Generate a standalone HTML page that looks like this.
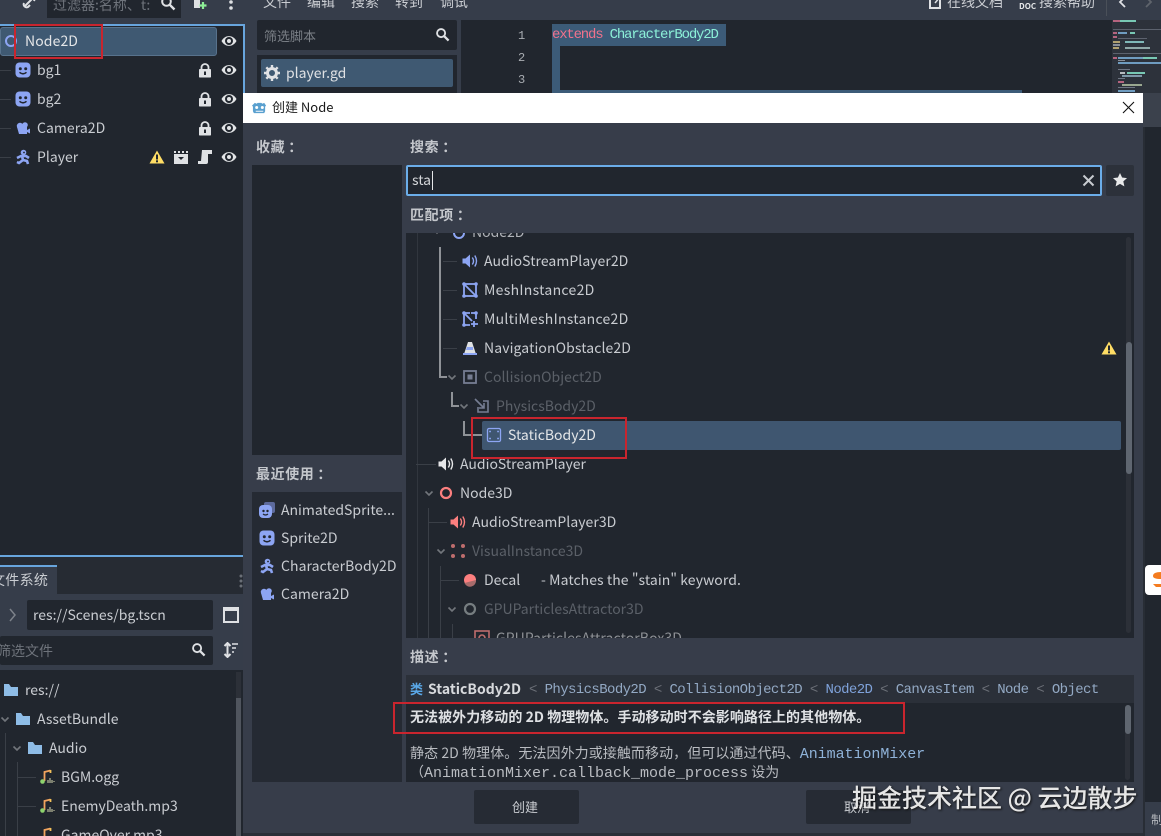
<!DOCTYPE html>
<html lang="zh"><head><meta charset="utf-8"><title>创建 Node</title>
<style>
html,body{margin:0;padding:0;background:#21262e}
#r{position:relative;width:1161px;height:836px;overflow:hidden;background:#363d4a;font-family:"Noto Sans CJK SC","Liberation Sans",sans-serif;font-size:14px;color:#c9ccd1;filter:blur(.3px)}
#r div,#r span.t,#r svg{position:absolute}
.t{white-space:nowrap;line-height:20px;display:block}
.d{color:#5b6068}
.l{font-weight:700;color:#c4c7cc;letter-spacing:.6px}
.l i{font-style:normal;margin-left:3px}
.b{background:#21262e}
.m{font-family:"Liberation Mono",monospace;font-size:13px}
.w{background:#3a3f47}
.g{background:#8f9297}
</style></head><body><div id="r">
<svg width="0" height="0" style="position:absolute">
<defs>
<symbol id="face" viewBox="0 0 16 16"><rect x=".5" y=".5" width="15" height="15" rx="4" fill="#8da5f3"/><circle cx="5.300" cy="6.800" r="1.500" fill="#21262e"/><circle cx="10.700" cy="6.800" r="1.500" fill="#21262e"/><path d="M4.500 10.300q3.500 3 7 0" fill="none" stroke="#21262e" stroke-width="1.500"/></symbol>
<symbol id="eye" viewBox="0 0 16 16"><path d="M.5 8C4 1.500 12 1.500 15.500 8C12 14.500 4 14.500 .5 8z" fill="#e2e4e6"/><circle cx="8" cy="8" r="4" fill="#21262e"/><circle cx="8" cy="8" r="2" fill="#e2e4e6"/></symbol>
<symbol id="lock" viewBox="0 0 16 16"><path d="M4.500 8V5.500a3.500 3.500 0 0 1 7 0V8" fill="none" stroke="#dfe1e4" stroke-width="1.800"/><rect x="2" y="7" width="12" height="8.500" rx=".8" fill="#dfe1e4"/><rect x="7" y="9.500" width="2" height="3.500" fill="#21262e"/></symbol>
<symbol id="cam" viewBox="0 0 16 16"><circle cx="5" cy="6" r="3.200" fill="#8da5f3"/><circle cx="10" cy="5" r="2.800" fill="#8da5f3"/><path d="M2 7h10v3l3-1.500v5l-3-1.500v2H4z" fill="#8da5f3"/></symbol>
<symbol id="run" viewBox="0 0 16 16"><circle cx="8.500" cy="3.500" r="2.800" fill="#8da5f3"/><circle cx="9" cy="3.500" r=".9" fill="#21262e"/><path d="M2 9l4-2h5l3 2M7 7l1 4-4 3-2-1M8 11l4 1 1 3" fill="none" stroke="#8da5f3" stroke-width="2.600"/></symbol>
<symbol id="warn" viewBox="0 0 16 16"><path d="M8 1.500L15.500 14.500H.5z" fill="#ffdd65"/><rect x="7" y="5.500" width="2" height="5" fill="#21262e"/><rect x="7" y="11.300" width="2" height="2" fill="#21262e"/></symbol>
<symbol id="search" viewBox="0 0 16 16"><circle cx="6.500" cy="6.500" r="4.300" fill="none" stroke="#dfe1e4" stroke-width="2"/><path d="M9.800 9.800l4.700 4.700" stroke="#dfe1e4" stroke-width="2.400"/></symbol>
<symbol id="spk" viewBox="0 0 16 16"><path d="M.5 5.500h3L8 1.500v13l-4.500-4h-3z" fill="currentColor"/><path d="M10.300 4.500q2.500 3.500 0 7M12.800 2.500q3.400 5.500 0 11" fill="none" stroke="currentColor" stroke-width="1.400"/></symbol>
<symbol id="down" viewBox="0 0 10 10"><path d="M1.500 3.500L5 7l3.500-3.500" fill="none" stroke="#72767c" stroke-width="1.600"/></symbol>
<symbol id="folder" viewBox="0 0 16 16"><path d="M1 2h5l2 3h7v9H1z" fill="#8ebce6"/></symbol>
<symbol id="music" viewBox="0 0 16 16"><path d="M5.500 12V3l6-1.500" fill="none" stroke="#f1a35e" stroke-width="1.800"/><path d="M11.500 1v3" stroke="#f4c25a" stroke-width="1.800"/><circle cx="3.500" cy="12.500" r="2.300" fill="#8ed36e"/><path d="M9 11v3M11 9v5M13 11v3M15 12v1" stroke="#d8d8b0" stroke-width="1"/></symbol>
</defs></svg>

<!-- scene dock -->
<div class="b" style="left:47px;top:0;width:134px;height:18px"></div>
<span class="t" style="left:53px;top:-5px;color:#6e737b">过滤器:名称、t:</span>
<svg style="left:160px;top:-5px" width="16" height="16"><use href="#search"/></svg>
<svg style="left:21px;top:-6px" width="16" height="16" viewBox="0 0 16 16"><path d="M4 12l8-8M3 9a3 3 0 0 0 4 4l2-2M13 7a3 3 0 0 0-4-4L7 5" fill="none" stroke="#dfe1e4" stroke-width="2"/></svg>
<svg style="left:192px;top:-2px" width="16" height="14" viewBox="0 0 16 14"><path d="M2 0h6v10H2z" fill="#dfe1e4"/><path d="M11 4v7M7.500 7.500h7" stroke="#8eef97" stroke-width="2.200"/></svg>
<svg style="left:228px;top:-2px" width="6" height="16"><circle cx="3" cy="4" r="1.800" fill="#dfe1e4"/><circle cx="3" cy="10" r="1.800" fill="#dfe1e4"/></svg>
<div class="b" style="left:0;top:24px;width:243px;height:532px"></div>
<div style="left:0;top:24px;width:244px;height:2px;background:#68a5dd"></div>
<div style="left:243px;top:24px;width:2px;height:69px;background:#68a5dd"></div>
<div style="left:0;top:27px;width:217px;height:29px;background:#3f5972;border:1px solid #58728c;border-radius:3px;box-sizing:border-box"></div>
<svg style="left:4px;top:34px" width="14" height="14"><circle cx="7" cy="7" r="5" fill="none" stroke="#8da5f3" stroke-width="2"/></svg>
<span class="t" style="left:25px;top:31px;color:#e4e6e8;letter-spacing:.1px">Node2D</span>
<svg style="left:221px;top:33px" width="16" height="16"><use href="#eye"/></svg>
<div class="w" style="left:0;top:70px;width:11px;height:1px"></div><div class="w" style="left:0;top:99px;width:11px;height:1px"></div><div class="w" style="left:0;top:128px;width:11px;height:1px"></div><div class="w" style="left:0;top:157px;width:11px;height:1px"></div>
<svg style="left:15px;top:62px" width="16" height="16"><use href="#face"/></svg><span class="t" style="left:37px;top:60px">bg1</span>
<svg style="left:15px;top:91px" width="16" height="16"><use href="#face"/></svg><span class="t" style="left:37px;top:89px">bg2</span>
<svg style="left:15px;top:120px" width="16" height="16"><use href="#cam"/></svg><span class="t" style="left:37px;top:118px;letter-spacing:.05px">Camera2D</span>
<svg style="left:15px;top:149px" width="16" height="16"><use href="#run"/></svg><span class="t" style="left:37px;top:147px">Player</span>
<svg style="left:197px;top:62px" width="16" height="16"><use href="#lock"/></svg><svg style="left:221px;top:62px" width="16" height="16"><use href="#eye"/></svg>
<svg style="left:197px;top:91px" width="16" height="16"><use href="#lock"/></svg><svg style="left:221px;top:91px" width="16" height="16"><use href="#eye"/></svg>
<svg style="left:197px;top:120px" width="16" height="16"><use href="#lock"/></svg><svg style="left:221px;top:120px" width="16" height="16"><use href="#eye"/></svg>
<svg style="left:149px;top:149px" width="16" height="16"><use href="#warn"/></svg>
<svg style="left:173px;top:149px" width="16" height="16" viewBox="0 0 16 16"><path d="M1 5h14v10H1z" fill="#dfe1e4"/><path d="M1 2h2v2H1zM5 2h2v2H5zM9 2h2v2H9zM13 2h2v2h-2z" fill="#dfe1e4"/><path d="M5 8h6l-3 3z" fill="#21262e"/></svg>
<svg style="left:197px;top:149px" width="16" height="16" viewBox="0 0 16 16"><path d="M5 1h10v4h-4v8a2 2 0 0 1-2 2H1v-3h3z" fill="#dfe1e4"/></svg>
<svg style="left:221px;top:149px" width="16" height="16"><use href="#eye"/></svg>

<!-- file system dock -->
<div style="left:0;top:555px;width:243px;height:2px;background:#68a5dd"></div>
<div style="left:0;top:557px;width:243px;height:8px;background:#262b33"></div>
<div style="left:57px;top:565px;width:186px;height:29px;background:#262b33"></div>
<div style="left:0;top:565px;width:57px;height:29px;background:#363d4a;border-top:2px solid #68a5dd;box-sizing:border-box"></div>
<span class="t" style="left:-9px;top:570px;letter-spacing:.3px">文件系统</span>
<svg style="left:238px;top:573px" width="6" height="16"><circle cx="3" cy="3" r="1.500" fill="#6a6f77"/><circle cx="3" cy="8" r="1.500" fill="#6a6f77"/><circle cx="3" cy="13" r="1.500" fill="#6a6f77"/></svg>
<svg style="left:8px;top:607px" width="9" height="16"><path d="M2 2l5 6-5 6" fill="none" stroke="#7d828a" stroke-width="1.500"/></svg>
<div class="b" style="left:27px;top:600px;width:186px;height:30px;border-radius:2px"></div>
<span class="t" style="left:33px;top:605px">res://Scenes/bg.tscn</span>
<svg style="left:223px;top:607px" width="16" height="16"><rect x="1" y="1" width="14" height="14" fill="none" stroke="#dfe1e4" stroke-width="2"/><rect x="1" y="1" width="14" height="3" fill="#dfe1e4"/></svg>
<div class="b" style="left:0;top:636px;width:213px;height:29px;border-radius:2px"></div>
<span class="t" style="left:-3px;top:641px;color:#6e737b">筛选文件</span>
<svg style="left:191px;top:642px" width="15" height="15" viewBox="0 0 16 16"><use href="#search"/></svg>
<svg style="left:223px;top:642px" width="16" height="16" viewBox="0 0 16 16"><path d="M4.500 1v14M1.500 4l3-3 3 3M1.500 12l3 3 3-3" fill="none" stroke="#dfe1e4" stroke-width="2"/><path d="M9 2h6M9 6h4M9 10h2" stroke="#dfe1e4" stroke-width="1.500"/></svg>
<div class="b" style="left:0;top:670px;width:243px;height:166px"></div>
<div style="left:236px;top:672px;width:5px;height:164px;background:#2c3038"></div>
<div style="left:236px;top:698px;width:5px;height:138px;background:#50555e"></div>
<div class="w" style="left:5px;top:733px;width:1px;height:103px"></div>
<div class="w" style="left:17px;top:762px;width:1px;height:74px"></div>
<div class="w" style="left:18px;top:777px;width:18px;height:1px"></div><div class="w" style="left:18px;top:806px;width:18px;height:1px"></div>
<svg style="left:3px;top:682px" width="16" height="16"><use href="#folder"/></svg><span class="t" style="left:25px;top:680px">res://</span>
<svg style="left:0;top:714px" width="10" height="10"><use href="#down"/></svg>
<svg style="left:15px;top:711px" width="16" height="16"><use href="#folder"/></svg><span class="t" style="left:37px;top:709px">AssetBundle</span>
<svg style="left:12px;top:743px" width="10" height="10"><use href="#down"/></svg>
<svg style="left:27px;top:740px" width="16" height="16"><use href="#folder"/></svg><span class="t" style="left:49px;top:738px">Audio</span>
<svg style="left:39px;top:769px" width="16" height="16"><use href="#music"/></svg><span class="t" style="left:61px;top:767px">BGM.ogg</span>
<svg style="left:39px;top:798px" width="16" height="16"><use href="#music"/></svg><span class="t" style="left:61px;top:796px">EnemyDeath.mp3</span>
<svg style="left:39px;top:827px" width="16" height="16"><use href="#music"/></svg><span class="t" style="left:61px;top:825px">GameOver.mp3</span>

<!-- script panel / top menu -->
<span class="t" style="left:263px;top:-8px">文件</span>
<span class="t" style="left:307px;top:-8px">编辑</span>
<span class="t" style="left:351px;top:-8px">搜索</span>
<span class="t" style="left:395px;top:-8px">转到</span>
<span class="t" style="left:440px;top:-8px">调试</span>
<svg style="left:928px;top:-4px" width="14" height="14" viewBox="0 0 14 14"><path d="M2 1v11h10V4" fill="none" stroke="#dfe1e4" stroke-width="2"/><path d="M7 7l5-6" stroke="#dfe1e4" stroke-width="1.500"/></svg>
<span class="t" style="left:947px;top:-8px">在线文档</span>
<span class="t" style="left:1019px;top:-3px;font-size:8px;font-weight:700;color:#e4e6e8">DOC</span>
<span class="t" style="left:1039px;top:-8px">搜索帮助</span>
<div style="left:1106px;top:0;width:1px;height:16px;background:#4a5059"></div>
<svg style="left:1118px;top:-3px" width="10" height="12"><path d="M7 0L2 5l5 5" fill="none" stroke="#dfe1e4" stroke-width="1.800"/></svg>
<svg style="left:1143px;top:-3px" width="10" height="12"><path d="M3 0l5 5-5 5" fill="none" stroke="#5f646c" stroke-width="1.800"/></svg>
<div class="b" style="left:257px;top:20px;width:200px;height:30px;border-radius:2px"></div>
<span class="t" style="left:264px;top:26px;font-size:13px;color:#7b8087">筛选脚本</span>
<svg style="left:435px;top:27px" width="15" height="15" viewBox="0 0 16 16"><use href="#search"/></svg>
<div class="b" style="left:257px;top:55px;width:200px;height:38px"></div>
<div style="left:261px;top:59px;width:192px;height:28px;background:#3f5972;border-radius:2px"></div>
<svg style="left:264px;top:65px" width="16" height="16" viewBox="0 0 16 16"><circle cx="8" cy="8" r="4.500" fill="none" stroke="#dfe1e4" stroke-width="3"/><path d="M8 0v3M8 13v3M0 8h3M13 8h3M2.300 2.300l2 2M11.700 11.700l2 2M13.700 2.300l-2 2M4.300 11.700l-2 2" stroke="#dfe1e4" stroke-width="2.400"/></svg>
<span class="t" style="left:286px;top:63px;color:#dfe1e4">player.gd</span>
<div class="b" style="left:461px;top:20px;width:651px;height:73px"></div>
<span class="t m" style="left:518px;top:26px;color:#a9adb2;font-size:12px">1</span>
<span class="t m" style="left:518px;top:48px;color:#a9adb2;font-size:12px">2</span>
<span class="t m" style="left:518px;top:70px;color:#a9adb2;font-size:12px">3</span>
<div style="left:552px;top:24px;width:174px;height:22px;background:#3c5b78"></div>
<div style="left:552px;top:46px;width:8px;height:47px;background:#3c5b78"></div>
<div style="left:552px;top:90px;width:470px;height:3px;background:#3c5b78"></div>
<span class="t m" style="left:552px;top:25px;font-size:14px;letter-spacing:-1.200px;color:#f0728c">extends <span style="color:#8cf0d8">CharacterBody2D</span></span>
<!-- minimap -->
<div style="left:1112px;top:20px;width:49px;height:73px;background:#2d323b"></div>
<div style="left:1113px;top:20px;width:7px;height:2px;background:#b5647f"></div><div style="left:1120px;top:20px;width:16px;height:2px;background:#78c8b4"></div>
<div style="left:1113px;top:29px;width:48px;height:1px;background:#5c626e"></div>
<div style="left:1113px;top:32px;width:4px;height:2px;background:#b5647f"></div><div style="left:1118px;top:32px;width:9px;height:2px;background:#6f9cc0"></div><div style="left:1130px;top:32px;width:5px;height:2px;background:#78c8b4"></div>
<div style="left:1113px;top:36px;width:4px;height:2px;background:#b5647f"></div>
<div style="left:1118px;top:38px;width:29px;height:1px;background:#5c626e"></div>
<div style="left:1113px;top:41px;width:7px;height:2px;background:#b0a070"></div><div style="left:1125px;top:41px;width:19px;height:2px;background:#7fb8b8"></div>
<div style="left:1113px;top:44px;width:7px;height:2px;background:#8a8f98"></div>
<div style="left:1113px;top:47px;width:6px;height:2px;background:#b0a070"></div><div style="left:1125px;top:47px;width:25px;height:2px;background:#8fa8a8"></div>
<div style="left:1113px;top:53px;width:48px;height:1px;background:#5c626e"></div>
<div style="left:1113px;top:57px;width:4px;height:2px;background:#b5647f"></div><div style="left:1118px;top:57px;width:25px;height:2px;background:#6f9cc0"></div><div style="left:1143px;top:57px;width:14px;height:2px;background:#78c8b4"></div>
<div style="left:1118px;top:60px;width:7px;height:1px;background:#8a8f98"></div>
<div style="left:1118px;top:62px;width:43px;height:2px;background:#6f9cc0"></div>
<div style="left:1118px;top:69px;width:12px;height:1px;background:#6f7684"></div>
<div style="left:1120px;top:72px;width:5px;height:2px;background:#b8bcc0"></div><div style="left:1127px;top:72px;width:18px;height:2px;background:#78c8b4"></div>
<div style="left:1122px;top:75px;width:20px;height:2px;background:#7f98a8"></div>
<div style="left:1118px;top:78px;width:7px;height:1px;background:#6f7684"></div>
<div style="left:1118px;top:81px;width:6px;height:2px;background:#b5647f"></div>
<div style="left:1122px;top:84px;width:20px;height:2px;background:#9aa890"></div>
<div style="left:1118px;top:87px;width:17px;height:1px;background:#6f7684"></div>
<div style="left:1118px;top:90px;width:17px;height:2px;background:#6f9cc0"></div>
<div style="left:1143px;top:93px;width:18px;height:34px;background:#3b414c"></div>
<div style="left:1145px;top:127px;width:16px;height:709px;background:#21262e"></div>
<div style="left:1143px;top:127px;width:2px;height:709px;background:#282d35"></div>
<div style="left:1145px;top:565px;width:16px;height:30px;background:#fff;border-radius:4px 0 0 4px"></div>
<svg style="left:1152px;top:571px" width="9" height="18"><path d="M9 1Q1 1 1 5q0 3 8 3zM1 13h8v3H4z" fill="#f47c20"/></svg>
<div style="left:1145px;top:802px;width:16px;height:34px;background:#363d4a"></div>
<span class="t" style="left:1151px;top:810px;font-size:12px;color:#b5b8bd">制</span>

<!-- dialog -->
<div style="left:243px;top:93px;width:900px;height:30px;background:#fff"></div>
<svg style="left:252px;top:100px" width="15" height="15" viewBox="0 0 16 16"><path d="M3 3l2 1 1-1h4l1 1 2-1 2 3-1 1v5l-1 2H2l-1-2V7L0 6z" fill="#5aa0cf"/><circle cx="5" cy="8" r="1.600" fill="#fff"/><circle cx="11" cy="8" r="1.600" fill="#fff"/><path d="M4 12h8" stroke="#fff"/></svg>
<span class="t" style="left:272px;top:97px;font-size:13px;color:#1a1a1a">创建 Node</span>
<svg style="left:1122px;top:101px" width="13" height="13"><path d="M1 1l11 11M12 1L1 12" stroke="#111" stroke-width="1.100"/></svg>
<div style="left:243px;top:123px;width:900px;height:710px;background:#373d4a"></div>
<div style="left:243px;top:833px;width:900px;height:3px;background:#2a2f38"></div>

<span class="t l" style="left:256px;top:137px">收藏<i>：</i></span>
<div class="b" style="left:252px;top:165px;width:150px;height:290px;background:#21262e"></div>
<span class="t l" style="left:256px;top:464px">最近使用<i>：</i></span>
<div style="left:252px;top:492px;width:150px;height:290px;background:#252a33"></div>
<svg style="left:259px;top:502px" width="16" height="16" viewBox="0 0 16 16"><rect x="5" y="0" width="11" height="11" rx="2" fill="#5d6a9c"/><rect x="0" y="3" width="13" height="13" rx="4" fill="#8da5f3"/><circle cx="4.500" cy="9" r="1.200" fill="#21262e"/><circle cx="8.500" cy="9" r="1.200" fill="#21262e"/><path d="M4 12q2.500 2 5 0" fill="none" stroke="#21262e" stroke-width="1.200"/></svg>
<span class="t" style="left:281px;top:500px">AnimatedSprite...</span>
<svg style="left:259px;top:530px" width="16" height="16"><use href="#face"/></svg><span class="t" style="left:281px;top:528px">Sprite2D</span>
<svg style="left:259px;top:558px" width="16" height="16"><use href="#run"/></svg><span class="t" style="left:281px;top:556px;letter-spacing:.07px">CharacterBody2D</span>
<svg style="left:259px;top:586px" width="16" height="16"><use href="#cam"/></svg><span class="t" style="left:281px;top:584px;letter-spacing:.05px">Camera2D</span>

<span class="t l" style="left:410px;top:137px">搜索<i>：</i></span>
<div class="b" style="left:406px;top:165px;width:696px;height:31px;border:2px solid #6bade9;box-sizing:border-box;border-radius:2px"></div>
<span class="t" style="left:412px;top:170px;color:#d4d6d9">sta</span>
<div style="left:432px;top:171px;width:1px;height:19px;background:#e4e6e8"></div>
<svg style="left:1082px;top:174px" width="13" height="13"><path d="M1.500 1.500l10 10M11.500 1.500l-10 10" stroke="#c8cbd0" stroke-width="2"/></svg>
<div style="left:1106px;top:165px;width:28px;height:31px;background:#2c313a;border-radius:2px"></div>
<svg style="left:1113px;top:173px" width="14" height="14" viewBox="0 0 16 16"><path d="M8 0l2.400 5.200 5.600.6-4.200 3.800 1.200 5.700L8 12.400 3 15.300l1.200-5.700L0 5.800l5.600-.6z" fill="#e8e9ea"/></svg>
<span class="t l" style="left:410px;top:205px">匹配项<i>：</i></span>

<!-- results tree -->
<div class="b" style="left:406px;top:233px;width:728px;height:405px;overflow:hidden">
<span class="t d" style="left:66px;top:-11px;color:#b0b3b8">Node2D</span>
<svg style="left:46px;top:-7px" width="14" height="14"><circle cx="7" cy="7" r="5" fill="none" stroke="#8da5f3" stroke-width="2"/></svg>
<svg style="left:26px;top:-7px" width="10" height="10"><use href="#down"/></svg>
<div style="left:11px;top:0;width:1px;height:405px;background:#31363e"></div>
<div class="g" style="left:33px;top:14px;width:2px;height:131px"></div><div class="g" style="left:33px;top:143px;width:8px;height:2px"></div>
<div class="w" style="left:37px;top:28px;width:14px;height:1px"></div><div class="w" style="left:37px;top:57px;width:14px;height:1px"></div><div class="w" style="left:37px;top:86px;width:14px;height:1px"></div><div class="w" style="left:37px;top:115px;width:14px;height:1px"></div>
<svg style="left:56px;top:20px;color:#8da5f3" width="16" height="16"><use href="#spk"/></svg><span class="t" style="left:78px;top:18px;letter-spacing:.05px">AudioStreamPlayer2D</span>
<svg style="left:56px;top:49px" width="16" height="16" viewBox="0 0 16 16"><rect x="2" y="2" width="12" height="12" fill="none" stroke="#8da5f3" stroke-width="1.800"/><path d="M2 2l12 12" stroke="#8da5f3" stroke-width="1.800"/><circle cx="2" cy="2" r="1.800" fill="#8da5f3"/><circle cx="14" cy="2" r="1.800" fill="#8da5f3"/><circle cx="2" cy="14" r="1.800" fill="#8da5f3"/><circle cx="14" cy="14" r="1.800" fill="#8da5f3"/></svg><span class="t" style="left:78px;top:47px;letter-spacing:.3px">MeshInstance2D</span>
<svg style="left:56px;top:78px" width="16" height="16" viewBox="0 0 16 16"><path d="M8 2H2v12h6M2 2l8 8" fill="none" stroke="#8da5f3" stroke-width="1.800"/><path d="M14 2v6" stroke="#8da5f3" stroke-width="1.800"/><path d="M9 2h5M12 10v6M9 13h7" stroke="#8da5f3" stroke-width="1.800"/><circle cx="2" cy="2" r="1.800" fill="#8da5f3"/><circle cx="14" cy="2" r="1.800" fill="#8da5f3"/><circle cx="2" cy="14" r="1.800" fill="#8da5f3"/></svg><span class="t" style="left:78px;top:76px;letter-spacing:.27px">MultiMeshInstance2D</span>
<svg style="left:56px;top:107px" width="16" height="16" viewBox="0 0 16 16"><path d="M6 2h4l4 12H2z" fill="#dfe1e4"/><path d="M5 7h6v3H4z" fill="#8da5f3"/><rect x="1" y="13" width="14" height="2" fill="#8da5f3"/></svg><span class="t" style="left:78px;top:105px;letter-spacing:.1px">NavigationObstacle2D</span>
<svg style="left:695px;top:107px" width="16" height="16"><use href="#warn"/></svg>
<svg style="left:41px;top:139px" width="10" height="10"><use href="#down"/></svg>
<svg style="left:56px;top:136px" width="16" height="16" viewBox="0 0 16 16"><rect x="2" y="2" width="12" height="12" fill="none" stroke="#767d92" stroke-width="1.800"/><rect x="5.500" y="5.500" width="5" height="5" fill="#767d92"/></svg><span class="t d" style="left:78px;top:134px;letter-spacing:.05px">CollisionObject2D</span>
<div class="g" style="left:45px;top:159px;width:2px;height:15px"></div><div class="g" style="left:45px;top:172px;width:8px;height:2px"></div>
<svg style="left:53px;top:168px" width="10" height="10"><use href="#down"/></svg>
<svg style="left:68px;top:165px" width="16" height="16" viewBox="0 0 16 16"><path d="M9 3h5v11H4V9" fill="none" stroke="#767d92" stroke-width="1.600"/><path d="M1 1l9 9M5 10h5V5" fill="none" stroke="#767d92" stroke-width="1.600"/></svg><span class="t d" style="left:90px;top:163px">PhysicsBody2D</span>
<div class="g" style="left:57px;top:188px;width:2px;height:15px"></div><div class="g" style="left:57px;top:201px;width:19px;height:2px"></div>
<div style="left:76px;top:188px;width:639px;height:29px;background:#3f5670;border-radius:2px"></div>
<svg style="left:80px;top:194px" width="16" height="16" viewBox="0 0 16 16"><rect x="1.500" y="1.500" width="13" height="13" rx="1.500" fill="none" stroke="#8da5f3" stroke-width="1.300"/><path d="M4 4.500h.1M12 4.500h.1M4 11.500h.1M12 11.500h.1" stroke="#8da5f3" stroke-width="1.600" stroke-linecap="square"/></svg><span class="t" style="left:102px;top:192px;color:#e4e6e8">StaticBody2D</span>
<div class="w" style="left:10px;top:231px;width:20px;height:1px"></div>
<svg style="left:32px;top:223px;color:#e6e7e9" width="16" height="16"><use href="#spk"/></svg><span class="t" style="left:54px;top:221px">AudioStreamPlayer</span>
<svg style="left:18px;top:255px" width="10" height="10"><use href="#down"/></svg>
<svg style="left:32px;top:252px" width="16" height="16"><circle cx="8" cy="8" r="5" fill="none" stroke="#fc7f7f" stroke-width="2.200"/></svg><span class="t" style="left:54px;top:250px">Node3D</span>
<div class="w" style="left:22px;top:275px;width:1px;height:130px"></div><div class="w" style="left:23px;top:289px;width:18px;height:1px"></div>
<svg style="left:44px;top:281px;color:#fc7f7f" width="16" height="16"><use href="#spk"/></svg><span class="t" style="left:66px;top:279px;letter-spacing:.05px">AudioStreamPlayer3D</span>
<svg style="left:30px;top:313px" width="10" height="10"><use href="#down"/></svg>
<svg style="left:44px;top:310px" width="16" height="16"><circle cx="3" cy="3" r="2" fill="#bd6d6d"/><circle cx="13" cy="3" r="2" fill="#bd6d6d"/><circle cx="3" cy="13" r="2" fill="#bd6d6d"/><circle cx="13" cy="13" r="2" fill="#bd6d6d"/></svg><span class="t d" style="left:66px;top:308px">VisualInstance3D</span>
<div class="w" style="left:34px;top:333px;width:1px;height:72px"></div><div class="w" style="left:35px;top:347px;width:18px;height:1px"></div>
<svg style="left:56px;top:339px" width="16" height="16" viewBox="0 0 16 16"><circle cx="8" cy="8" r="6" fill="#fc7f7f"/><path d="M2.500 11L14 8a6 6 0 0 1-11.500 3z" fill="#a86b6b"/></svg><span class="t" style="left:78px;top:337px">Decal</span>
<span class="t" style="left:135px;top:337px;letter-spacing:.07px">- Matches the "stain" keyword.</span>
<svg style="left:41px;top:371px" width="10" height="10"><use href="#down"/></svg>
<svg style="left:56px;top:368px" width="16" height="16"><circle cx="8" cy="8" r="5" fill="none" stroke="#767d80" stroke-width="2.200"/></svg><span class="t d" style="left:78px;top:366px">GPUParticlesAttractor3D</span>
<div class="w" style="left:46px;top:391px;width:1px;height:14px"></div>
<svg style="left:68px;top:397px" width="16" height="16" viewBox="0 0 16 16"><rect x="1" y="1" width="14" height="14" fill="none" stroke="#bd6d6d" stroke-width="1.600"/><circle cx="8" cy="8" r="3" fill="none" stroke="#bd6d6d" stroke-width="1.600"/></svg><span class="t d" style="left:90px;top:395px;color:#8f9297;letter-spacing:.08px">GPUParticlesAttractorBox3D</span>
<div style="left:720px;top:4px;width:5px;height:396px;background:#2c3038;border-radius:3px"></div>
<div style="left:720px;top:109px;width:6px;height:132px;background:#5f6670;border-radius:3px"></div>
</div>

<!-- description -->
<span class="t l" style="left:410px;top:647px">描述<i>：</i></span>
<div class="b" style="left:406px;top:675px;width:728px;height:107px"></div>
<div style="left:406px;top:675px;width:728px;height:28px;background:#2b3039"></div>
<span class="t" style="left:410px;top:679px;color:#5aa8e8;font-weight:700;font-size:13px">类</span>
<span class="t" style="left:428px;top:679px;font-weight:700;font-size:14px;color:#d8dadd">StaticBody2D</span>
<span class="t m" style="left:529px;top:680px;color:#93a9c4;font-size:14px;letter-spacing:-.6px"><span style="color:#6c7078">&lt;</span> PhysicsBody2D <span style="color:#6c7078">&lt;</span> CollisionObject2D <span style="color:#6c7078">&lt;</span> <span style="color:#7fa2da">Node2D</span> <span style="color:#6c7078">&lt;</span> CanvasItem <span style="color:#6c7078">&lt;</span> Node <span style="color:#6c7078">&lt;</span> Object</span>
<span class="t" style="left:410px;top:707px;font-weight:700;font-size:14px;color:#dfe1e4;letter-spacing:.05px">无法被外力移动的 2D 物理物体。手动移动时不会影响路径上的其他物体。</span>
<span class="t" style="left:410px;top:743px;font-size:14px;color:#b9bcc1;letter-spacing:.07px">静态 2D 物理体。无法因外力或接触而移动，但可以通过代码、<span class="m" style="font-size:15px;color:#8fb2d8;letter-spacing:-.05px">AnimationMixer</span></span>
<span class="t" style="left:410px;top:762px;font-size:14px;color:#b9bcc1">（<span class="m" style="font-size:15px;color:#b9bcc1">AnimationMixer.callback_mode_process</span> 设为</span>
<div style="left:1125px;top:705px;width:5px;height:75px;background:#2c3038;border-radius:3px"></div>
<div style="left:1125px;top:705px;width:6px;height:29px;background:#5f6670;border-radius:3px"></div>

<!-- buttons -->
<div style="left:474px;top:790px;width:105px;height:34px;background:#262b34;border-radius:2px"></div>
<span class="t" style="left:512px;top:797px;font-size:13px">创建</span>
<div style="left:806px;top:790px;width:105px;height:34px;background:#262b34;border-radius:2px"></div>
<span class="t" style="left:844px;top:797px;font-size:13px">取消</span>

<!-- red boxes -->
<div style="left:14px;top:24px;width:89px;height:35px;border:2px solid #c9252e;box-sizing:border-box"></div>
<div style="left:471px;top:417px;width:156px;height:42px;border:2px solid #c9252e;box-sizing:border-box"></div>
<div style="left:393px;top:702px;width:512px;height:32px;border:2px solid #c9252e;box-sizing:border-box"></div>

<!-- watermark -->
<span class="t" style="left:852px;top:782px;font-size:25px;line-height:30px;font-weight:500;color:#e6e6e6;text-shadow:1px 1px 2px #111">掘金技术社区 @ 云边散步</span>
</div></body></html>
